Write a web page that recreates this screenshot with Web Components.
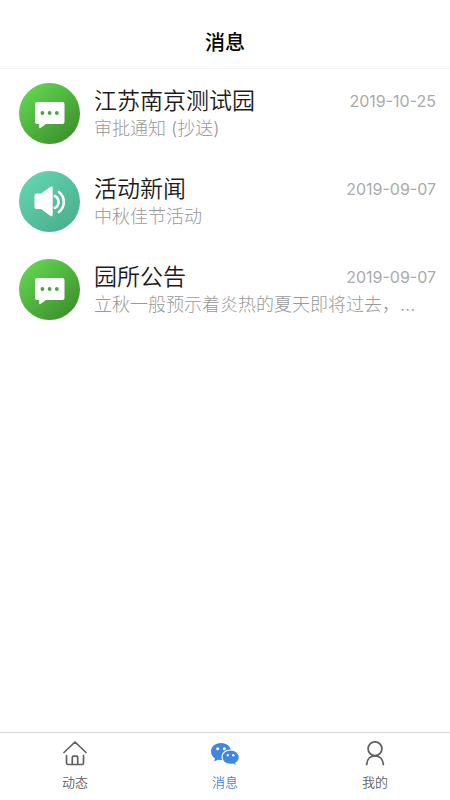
<!DOCTYPE html>
<html lang="zh-CN">
<head>
<meta charset="utf-8">
<meta name="viewport" content="width=device-width, initial-scale=1">
<title>消息</title>
<style>
  html, body { margin: 0; height: 100%; background: #fff; }
  body { font-family: Inter, "Noto Sans CJK SC", sans-serif; color: #1c1c1c; }
</style>
</head>
<body>
<message-app></message-app>

<template id="app-template">
  <style>
    :host { display: flex; flex-direction: column; min-height: 100vh; }
    main { flex: 1; }
  </style>
  <page-header>消息</page-header>
  <main>
    <message-item icon="chat" date="2019-10-25"><span slot="title">江苏南京测试园</span>审批通知 (抄送)</message-item>
    <message-item icon="sound" date="2019-09-07"><span slot="title">活动新闻</span>中秋佳节活动</message-item>
    <message-item icon="chat" date="2019-09-07"><span slot="title">园所公告</span>立秋一般预示着炎热的夏天即将过去，…</message-item>
  </main>
  <tab-bar>
    <tab-item icon="home">动态</tab-item>
    <tab-item icon="wechat" active>消息</tab-item>
    <tab-item icon="person">我的</tab-item>
  </tab-bar>
</template>

<script>
const icons = {
  chat: `<svg viewBox="0 0 61 61" aria-hidden="true">
    <defs><linearGradient id="g" x1="0.15" y1="0.1" x2="0.85" y2="0.9"><stop offset="0" stop-color="#62d350"/><stop offset="1" stop-color="#3d922c"/></linearGradient></defs>
    <circle cx="30.5" cy="30.5" r="30.5" fill="url(#g)"/>
    <path d="M18 19H43.500Q45.500 19 45.500 21V39Q45.500 41 43.500 41H27L21.300 45Q20 45.600 20 44V41H18Q16 41 16 39V21Q16 19 18 19Z" fill="#fff"/>
    <g fill="#48a83b"><circle cx="23.400" cy="30" r="1.900"/><circle cx="30.600" cy="30" r="1.900"/><circle cx="37.800" cy="30" r="1.900"/></g></svg>`,
  sound: `<svg viewBox="0 0 61 61" aria-hidden="true">
    <defs><linearGradient id="g" x1="0.15" y1="0.1" x2="0.85" y2="0.9"><stop offset="0" stop-color="#62d3b0"/><stop offset="1" stop-color="#4bb08d"/></linearGradient></defs>
    <circle cx="30.5" cy="30.5" r="30.5" fill="url(#g)"/>
    <path d="M17.500 22.500H22L31.500 15.700Q33.700 14.500 33.700 16.700V44Q33.700 46 31.500 45L22 38H17.500Q15.500 38 15.500 36V24.500Q15.500 22.500 17.500 22.500Z" fill="#fff"/>
    <path d="M35.800 25A6.700 6.700 0 0 1 35.800 37M39.800 21A12.500 12.500 0 0 1 39.800 41" fill="none" stroke="#fff" stroke-width="2.600" stroke-linecap="round"/></svg>`,
  home: `<svg viewBox="0 0 30 30" fill="none" stroke="#606060" stroke-width="1.700" stroke-linejoin="round" stroke-linecap="round" aria-hidden="true">
    <path d="M4 13.500L15 3L26 13.500M6.500 16.500V24Q6.500 25.500 8 25.500H22Q23.500 25.500 23.500 24V16.500M12.300 25V18.500Q12.300 17.200 13.500 17.200H16.500Q17.700 17.200 17.700 18.500V25"/></svg>`,
  wechat: `<svg viewBox="0 0 30 30" aria-hidden="true">
    <path d="M11 4C5 4 1 7.900 1 12.500C1 15.300 2.500 17.800 5 19.400L4.200 22.500L8 20.700C9 21 10 21 11 21C17 21 21 17.200 21 12.500S17 4 11 4Z" fill="#3f87e0"/>
    <path d="M20.500 11C15.600 11 12 14.100 12 18.200S15.600 25.400 20.500 25.400L23 25.100L26.500 27L25.800 24C27.900 22.800 29.300 20.700 29.300 18.200C29.300 14.100 25.400 11 20.500 11Z" fill="#3f87e0" stroke="#fff" stroke-width="1.200"/>
    <g fill="#fff"><circle cx="7.700" cy="9.700" r="1.500"/><circle cx="14.300" cy="9.700" r="1.500"/><circle cx="17.800" cy="16.300" r="1.200"/><circle cx="23.300" cy="16.300" r="1.200"/></g></svg>`,
  person: `<svg viewBox="0 0 30 30" fill="none" stroke="#606060" stroke-width="1.800" stroke-linecap="round" aria-hidden="true">
    <circle cx="15" cy="9.800" r="6.900"/><path d="M6.700 25.500C7 20 10.500 16.900 15 16.900S23 20 23.300 25.500"/></svg>`
};

class PageHeader extends HTMLElement {
  connectedCallback() {
    this.attachShadow({ mode: "open" }).innerHTML = `
      <style>
        :host { display: block; border-bottom: 1px solid #f4f4f4; }
        h1 { margin: 0; padding: 28px 16px 10px; font-size: 20px; line-height: 30px; font-weight: 500; text-align: center; color: #000; }
      </style>
      <header><h1><slot></slot></h1></header>`;
  }
}

class MessageItem extends HTMLElement {
  connectedCallback() {
    this.attachShadow({ mode: "open" }).innerHTML = `
      <style>
        :host { display: block; }
        article { display: flex; align-items: center; gap: 14px; height: 88px; padding: 0 14px 0 19px; }
        svg { display: block; flex: none; width: 61px; height: 61px; }
        .body { flex: 1; min-width: 0; }
        .top { display: flex; align-items: center; justify-content: space-between; gap: 8px; }
        h2 { margin: 0; font-size: 23px; line-height: 32px; font-weight: 350; }
        time { font-size: 16px; line-height: 32px; color: #aaa; }
        p { margin: 0; font-size: 18px; line-height: 24px; font-weight: 300; color: #999; white-space: nowrap; overflow: hidden; text-overflow: ellipsis; }
      </style>
      <article>
        ${icons[this.getAttribute("icon")]}
        <div class="body">
          <div class="top"><h2><slot name="title"></slot></h2><time>${this.getAttribute("date")}</time></div>
          <p><slot></slot></p>
        </div>
      </article>`;
  }
}

class TabBar extends HTMLElement {
  connectedCallback() {
    this.attachShadow({ mode: "open" }).innerHTML = `
      <style>
        :host { display: block; position: sticky; bottom: 0; background: #fff; border-top: 1px solid #d8d8d8; }
        nav { display: grid; grid-template-columns: repeat(3, 1fr); }
      </style>
      <nav><slot></slot></nav>`;
  }
}

class TabItem extends HTMLElement {
  connectedCallback() {
    const active = this.hasAttribute("active");
    this.attachShadow({ mode: "open" }).innerHTML = `
      <style>
        :host { display: block; color: #606060; }
        :host([active]) { color: #3f87d8; }
        button { display: flex; flex-direction: column; align-items: center; gap: 3px; width: 100%; padding: 6px 0 8px; border: 0; background: none; color: inherit; font: inherit; font-size: 13px; line-height: 20px; font-weight: 350; cursor: pointer; }
        svg { display: block; width: 30px; height: 30px; }
      </style>
      <button type="button"${active ? ' aria-current="page"' : ""}>${icons[this.getAttribute("icon")]}<span><slot></slot></span></button>`;
  }
}

class MessageApp extends HTMLElement {
  connectedCallback() {
    this.attachShadow({ mode: "open" }).append(document.getElementById("app-template").content.cloneNode(true));
  }
}

customElements.define("page-header", PageHeader);
customElements.define("message-item", MessageItem);
customElements.define("tab-item", TabItem);
customElements.define("tab-bar", TabBar);
customElements.define("message-app", MessageApp);
</script>
</body>
</html>
